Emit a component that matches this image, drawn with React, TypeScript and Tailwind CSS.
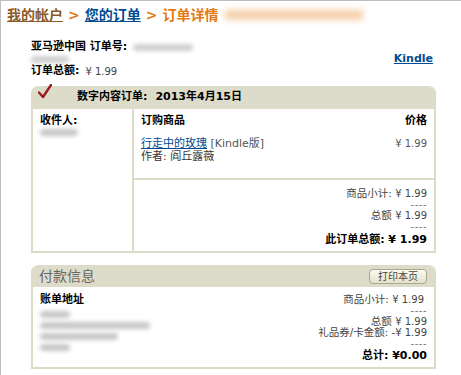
const font = { fontFamily: '"DejaVu Sans", "Noto Sans CJK SC", sans-serif' };

function Check() {
    return (
        <svg width="14" height="15" viewBox="0 0 14 15" className="absolute left-[5px] top-[-2px]">
            <path d="M1 8.5 L5 13 L13 1" fill="none" stroke="#9b1a1a" strokeWidth="2.4" strokeLinecap="round" strokeLinejoin="round" />
        </svg>
    );
}

function Blur({ w, c = "bg-[#a0a0a0]" }: { w: string; c?: string }) {
    return <div className={`h-[7px] ${w} ${c} rounded-sm blur-[2px] opacity-60`} />;
}

function Dashes() {
    return <div className="text-[10px] leading-[11px] tracking-[0.5px] text-[#777]">----</div>;
}

export default function App() {
    return (
        <div style={font} className="w-[461px] h-[375px] bg-white border-t border-l border-[#bdbdbd] text-[11px] text-[#333] overflow-hidden">
            {/* breadcrumb */}
            <div className="flex items-center gap-[5px] pl-[6px] pt-[6px] h-[22px] text-[14px] font-bold">
                <span className="text-[#8a5a2a] underline">我的帐户</span>
                <span className="text-[#e47911]">&gt;</span>
                <span className="text-[#004b91] underline">您的订单</span>
                <span className="text-[#e47911]">&gt;</span>
                <span className="text-[#e47911]">订单详情</span>
                <div className="ml-[2px] h-[10px] w-[138px] bg-[#f0b070] blur-[3px] opacity-60" />
            </div>

            {/* order summary */}
            <div className="flex items-center justify-between pl-[30px] pr-[28px] mt-[18px]">
                <div className="flex flex-col">
                    <div className="flex items-center h-[12px] gap-[6px]">
                        <span className="font-bold text-black">亚马逊中国 订单号:</span>
                        <Blur w="w-[60px]" c="bg-[#b0b0b0]" />
                    </div>
                    <div className="flex items-center h-[12px]">
                        <Blur w="w-[38px]" c="bg-[#b0b0b0]" />
                    </div>
                    <div className="flex items-center h-[12px] gap-[6px]">
                        <span className="font-bold text-black">订单总额:</span>
                        <span className="text-[10px] text-[#444]">¥ 1.99</span>
                    </div>
                </div>
                <span className="text-[#004b91] font-bold underline">Kindle</span>
            </div>

            {/* digital order box */}
            <div className="ml-[30px] w-[405px] mt-[9px] border-2 border-t-0 border-[#dcdbc8] rounded-t-[7px]">
                <div className="relative flex items-center h-[23px] bg-[#dddcca] rounded-t-[6px] pl-[44px] font-bold text-black">
                    <Check />
                    <span>数字内容订单:</span>
                    <span className="ml-[8px]">2013年4月15日</span>
                </div>
                <div className="flex">
                    <div className="w-[101px] border-r-2 border-[#dcdbc8] pl-[7px] pt-[6px]">
                        <div className="font-bold text-black leading-[12px]">收件人:</div>
                        <div className="mt-[2px]">
                            <Blur w="w-[38px]" />
                        </div>
                    </div>
                    <div className="flex-1 flex flex-col">
                        <div className="h-[71px] border-b-2 border-[#dcdbc8] px-[7px] pt-[6px]">
                            <div className="flex justify-between font-bold text-black leading-[12px]">
                                <span>订购商品</span>
                                <span>价格</span>
                            </div>
                            <div className="flex justify-between mt-[10px] leading-[13px]">
                                <div>
                                    <span className="text-[#004b91] underline">行走中的玫瑰</span>
                                    <span className="text-[#555]"> [Kindle版]</span>
                                    <div>作者: 阎丘露薇</div>
                                </div>
                                <span className="text-[#555] text-[10px]">¥ 1.99</span>
                            </div>
                        </div>
                        <div className="flex flex-col items-end px-[7px] pt-[8px] pb-[5px] leading-[11px]">
                            <div className="text-[#444] text-[10.5px]">商品小计: <span className="text-[10px]">¥ 1.99</span></div>
                            <Dashes />
                            <div className="text-[#444] text-[10.5px]">总额 <span className="text-[10px]">¥ 1.99</span></div>
                            <Dashes />
                            <div className="font-bold text-black mt-[2px] leading-[12px]">此订单总额: ¥ 1.99</div>
                        </div>
                    </div>
                </div>
            </div>

            {/* payment box */}
            <div className="ml-[30px] w-[405px] mt-[12px] border-2 border-t-0 border-[#dcdbc8] rounded-t-[7px]">
                <div className="flex items-center justify-between h-[22px] bg-[#dddcca] rounded-t-[6px] pl-[6px] pr-[7px]">
                    <span className="text-[14px] text-[#666]">付款信息</span>
                    <span className="h-[15px] px-[8px] flex items-center text-[10px] text-[#444] border border-[#a9a790] rounded-[4px] bg-gradient-to-b from-[#fbfaf0] to-[#e4e2cc]">打印本页</span>
                </div>
                <div className="flex justify-between pl-[7px] pr-[7px] pt-[7px] pb-[5px]">
                    <div className="flex flex-col gap-[4px]">
                        <div className="font-bold text-black leading-[12px] mb-[1px]">账单地址</div>
                        <Blur w="w-[30px]" />
                        <Blur w="w-[110px]" />
                        <Blur w="w-[78px]" />
                        <Blur w="w-[30px]" />
                    </div>
                    <div className="flex flex-col items-end leading-[11px] text-[10.5px] text-[#444]">
                        <div className="pr-[3px]">商品小计: <span className="text-[10px]">¥ 1.99</span></div>
                        <Dashes />
                        <div>总额 <span className="text-[10px]">¥ 1.99</span></div>
                        <div>礼品券/卡金额: <span className="text-[10px]">-¥ 1.99</span></div>
                        <Dashes />
                        <div className="font-bold text-[11px] text-black mt-[1px] leading-[12px]">总计: ¥0.00</div>
                    </div>
                </div>
            </div>
        </div>
    );
}
